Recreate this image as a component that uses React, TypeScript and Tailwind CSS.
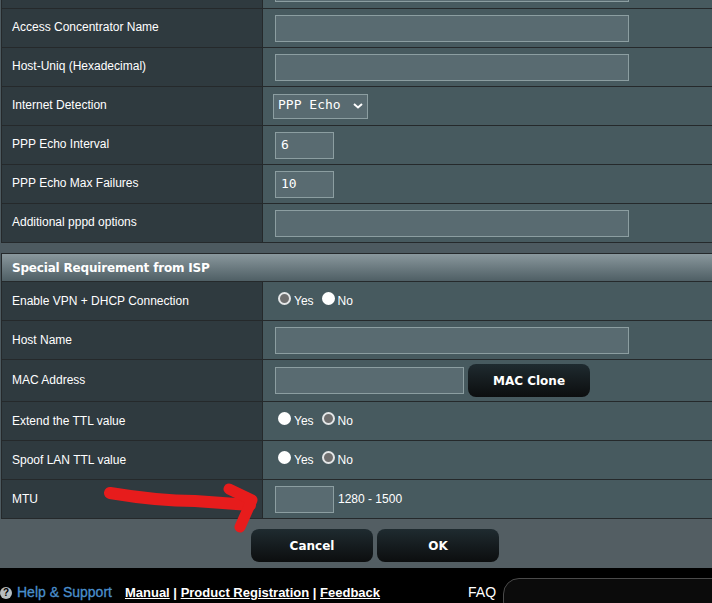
import React from "react";

const Radio = ({ on }: { on?: boolean }) => (
  <span className={`inline-block w-[13px] h-[13px] rounded-full border-2 ${on ? "border-[#e4e6e7] bg-[#6f6f6f]" : "border-white bg-white"}`} />
);

const YesNo = ({ yes }: { yes: boolean }) => (
  <div className="flex items-start text-white text-[12px] leading-[14px] pl-[15px] pb-[3px]">
    <Radio on={yes} />
    <span className="ml-[3px] mt-[2px]">Yes</span>
    <span className="ml-[8px]"><Radio on={!yes} /></span>
    <span className="ml-[3px] mt-[2px]">No</span>
  </div>
);

const Input = ({ w, value }: { w: string; value?: string }) => (
  <div className={`${w} h-[27px] border border-[#8c9ea1] bg-[#596b71] text-white text-[13px] leading-[23px] pl-[5px] font-['DejaVu_Sans_Mono',monospace] box-border`}>
    {value}
  </div>
);

const Row = ({ label, h = "h-[39px]", lift, children }: { label: string; h?: string; lift?: boolean; children?: React.ReactNode }) => (
  <div className={`flex ${h} border-b border-[#25292b]`}>
    <div className={`w-[261px] shrink-0 bg-[#2f3a3f] border-r border-[#25292b] flex items-center pl-[10px] text-white text-[12px] ${lift ? "pb-[3px]" : "pb-[1px]"}`}>
      {label}
    </div>
    <div className="flex-1 bg-[#475a5f] flex items-center pl-[12px]">{children}</div>
  </div>
);

const DarkBtn = ({ w, children }: { w: string; children: React.ReactNode }) => (
  <button className={`${w} h-[33px] rounded-[8px] bg-gradient-to-b from-[#1f2b30] to-[#0c0e0f] text-white text-[12px] font-bold font-['DejaVu_Sans',sans-serif]`}>
    {children}
  </button>
);

export default function App() {
  return (
    <div className="relative w-[712px] h-[603px] overflow-hidden bg-[#4d5a60] font-['Liberation_Sans',Arial,sans-serif]">
      <div className="ml-[1px] w-[760px] border-l border-[#25292b]">
        <div className="flex h-[9px] border-b border-[#25292b]">
          <div className="w-[261px] shrink-0 bg-[#2f3a3f] border-r border-[#25292b]" />
          <div className="flex-1 bg-[#475a5f] pl-[12px] flex items-end pb-[6px]">
            <div className="w-[354px] h-[3px] border-b border-x border-[#8c9ea1] bg-[#596b71]" />
          </div>
        </div>
        <Row lift label="Access Concentrator Name"><Input w="w-[354px]" /></Row>
        <Row lift label="Host-Uniq (Hexadecimal)"><Input w="w-[354px]" /></Row>
        <Row lift label="Internet Detection">
          <div className="-ml-[2px] w-[95px] h-[25px] border border-[#8c9ea1] bg-[#596b71] text-white text-[13px] leading-[22px] pl-[4px] pb-[2px] flex items-center justify-between pr-[4px] font-['DejaVu_Sans_Mono',monospace] whitespace-pre box-border">
            <span>PPP Echo</span>
            <svg className="mt-[2px]" width="10" height="6" viewBox="0 0 10 6" fill="none" stroke="white" strokeWidth="2"><path d="M1 1l4 3.5L9 1" /></svg>
          </div>
        </Row>
        <Row lift label="PPP Echo Interval"><Input w="w-[59px]" value="6" /></Row>
        <Row lift label="PPP Echo Max Failures"><Input w="w-[59px]" value="10" /></Row>
        <Row lift label="Additional pppd options"><Input w="w-[354px]" /></Row>
      </div>

      <div className="h-[10px]" />

      <div className="ml-[1px] w-[760px] border-l border-[#25292b]">
        <div className="h-[29px] border-y border-[#25292b] bg-gradient-to-b from-[#8a989d] to-[#4f5f65] flex items-center pl-[10px] text-white text-[12px] font-bold tracking-[-0.18px] [font-family:'DejaVu_Sans',sans-serif]">
          Special Requirement from ISP
        </div>
        <Row label="Enable VPN + DHCP Connection"><div className="-ml-[12px]"><YesNo yes /></div></Row>
        <Row label="Host Name"><Input w="w-[354px]" /></Row>
        <Row label="MAC Address" h="h-[42px]">
          <Input w="w-[189px]" />
          <div className="ml-[4px]"><DarkBtn w="w-[122px]">MAC Clone</DarkBtn></div>
        </Row>
        <Row label="Extend the TTL value"><div className="-ml-[12px]"><YesNo yes={false} /></div></Row>
        <Row label="Spoof LAN TTL value"><div className="-ml-[12px]"><YesNo yes={false} /></div></Row>
        <Row label="MTU">
          <Input w="w-[59px]" />
          <span className="ml-[4px] text-white text-[12px]">1280 - 1500</span>
        </Row>
      </div>

      <div className="h-[49px] bg-[#535e63] flex justify-center gap-[4px] pt-[10px] pl-[38px] box-border">
        <DarkBtn w="w-[122px]">Cancel</DarkBtn>
        <DarkBtn w="w-[122px]">OK</DarkBtn>
      </div>

      <div className="h-[35px] bg-black flex items-start relative text-[13px] font-bold whitespace-nowrap">
        <div className="flex items-center mt-[14px]">
          <span className="w-[12px] h-[12px] rounded-full bg-[#b8bec1] text-black text-[10px] leading-[12px] text-center">?</span>
          <span className="ml-[5px] text-[#4a8fcc] text-[14px] font-normal [-webkit-text-stroke:0.3px_#4a8fcc]">Help &amp; Support</span>
          <span className="ml-[13px] text-white"><span className="underline">Manual</span> | <span className="underline">Product Registration</span> | <span className="underline">Feedback</span></span>
          <span className="ml-[88px] text-white font-normal text-[14px]">FAQ</span>
        </div>
        <div className="absolute left-[503px] top-[10px] w-[240px] h-[40px] rounded-[16px] border border-[#4a4a4a] bg-[#0b0b0b]" />
      </div>

      <svg className="absolute left-0 top-0 pointer-events-none" width="712" height="603" fill="none" stroke="#e71c1c" strokeLinecap="round" strokeLinejoin="round">
        <path d="M110 493C140 498 170 501 195 501L250 505" strokeWidth="12" />
        <path d="M229 489L252 500L240 527" strokeWidth="11" />
      </svg>
    </div>
  );
}
